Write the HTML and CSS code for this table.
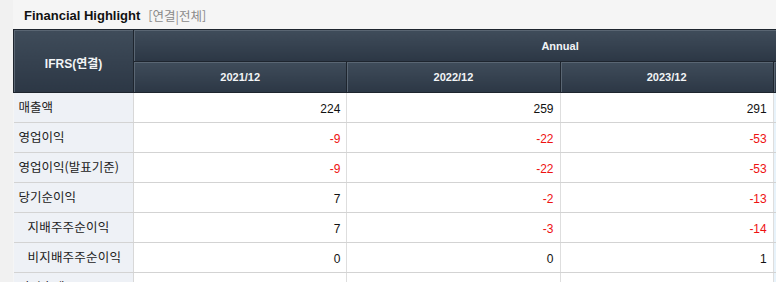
FILE: index.html
```html
<!DOCTYPE html>
<html lang="ko">
<head>
<meta charset="utf-8">
<link rel="stylesheet" href="styles.css">
</head>
<body>
<div class="page">
  <div class="panel">
    <div class="title"><span class="name">Financial Highlight</span><span class="sub">[연결|전체]</span></div>
    <table class="fin">
      <colgroup>
        <col class="c-label"><col class="c-val"><col class="c-val"><col class="c-val"><col class="c-val">
      </colgroup>
      <thead>
        <tr class="h1">
          <th rowspan="2" class="ifrs">IFRS(연결)</th>
          <th colspan="4">Annual</th>
        </tr>
        <tr class="h2">
          <th>2021/12</th><th>2022/12</th><th>2023/12</th><th>2024/12(E)</th>
        </tr>
      </thead>
      <tbody>
        <tr><td class="lbl">매출액</td><td>224</td><td>259</td><td>291</td><td class="est"></td></tr>
        <tr><td class="lbl">영업이익</td><td class="neg">-9</td><td class="neg">-22</td><td class="neg">-53</td><td class="est"></td></tr>
        <tr><td class="lbl">영업이익(발표기준)</td><td class="neg">-9</td><td class="neg">-22</td><td class="neg">-53</td><td class="est"></td></tr>
        <tr><td class="lbl">당기순이익</td><td>7</td><td class="neg">-2</td><td class="neg">-13</td><td class="est"></td></tr>
        <tr><td class="lbl sub2">지배주주순이익</td><td>7</td><td class="neg">-3</td><td class="neg">-14</td><td class="est"></td></tr>
        <tr><td class="lbl sub2">비지배주주순이익</td><td>0</td><td>0</td><td>1</td><td class="est"></td></tr>
        <tr><td class="lbl">자산총계</td><td></td><td></td><td></td><td class="est"></td></tr>
      </tbody>
    </table>
  </div>
</div>
</body>
</html>
```
FILE: styles.css
```css
html, body {
  margin: 0;
  padding: 0;
  background: #f1f1f1;
  overflow: hidden;
}
.page {
  width: 776px;
  height: 282px;
  overflow: hidden;
  padding-left: 13px;
  box-sizing: border-box;
}
.panel {
  background: #f5f5f5;
  width: 1100px;
}
.title {
  height: 29px;
  display: flex;
  align-items: center;
  padding-left: 11px;
  padding-top: 1px;
  box-sizing: border-box;
}
.title .name {
  font-family: "Liberation Sans", Arial, sans-serif;
  font-weight: bold;
  font-size: 13px;
  color: #111;
}
.title .sub {
  font-family: "Noto Sans CJK KR", "Liberation Sans", sans-serif;
  font-size: 12.5px;
  color: #8a8a8a;
  margin-left: 8px;
}
.fin {
  border-collapse: collapse;
  table-layout: fixed;
  width: 974px;
}
.c-label { width: 120px; }
.c-val { width: 213px; }
.fin th {
  font-family: "Liberation Sans", Arial, sans-serif;
  font-weight: bold;
  font-size: 11px;
  color: #f2f4f6;
  background: linear-gradient(#3f4c5a, #2c3745);
  border: 1px solid #1e252e;
  box-shadow: inset 1px 1px 0 #5a6673;
  padding: 0;
  height: 30px;
  text-align: center;
}
.fin .h1 th { height: 31px; }
.fin th.ifrs {
  font-family: "Liberation Sans", "Noto Sans CJK KR", sans-serif;
  font-size: 12px;
  padding-top: 2px;
}
.fin td {
  height: 30px;
  padding: 0 6px 0 5px;
  border-bottom: 1px solid #d3d3d3;
  border-right: 1px solid #dedede;
  background: #fff;
  text-align: right;
  font-family: "Liberation Sans", Arial, sans-serif;
  font-size: 12px;
  color: #111;
  vertical-align: middle;
  padding-top: 3px;
  box-sizing: border-box;
}
.fin td.lbl {
  background: #eef1f6;
  text-align: left;
  font-family: "Noto Sans CJK KR", "Liberation Sans", sans-serif;
  font-size: 12.5px;
  color: #222;
  padding-top: 0;
  padding-bottom: 3px;
  border-right: 1px solid #d8d8d8;
}
.fin td.sub2 { padding-left: 14px; letter-spacing: 0.2px; }
.fin td.neg { color: #ee1111; }
.fin td.est { background: #e8f3fb; }
```
